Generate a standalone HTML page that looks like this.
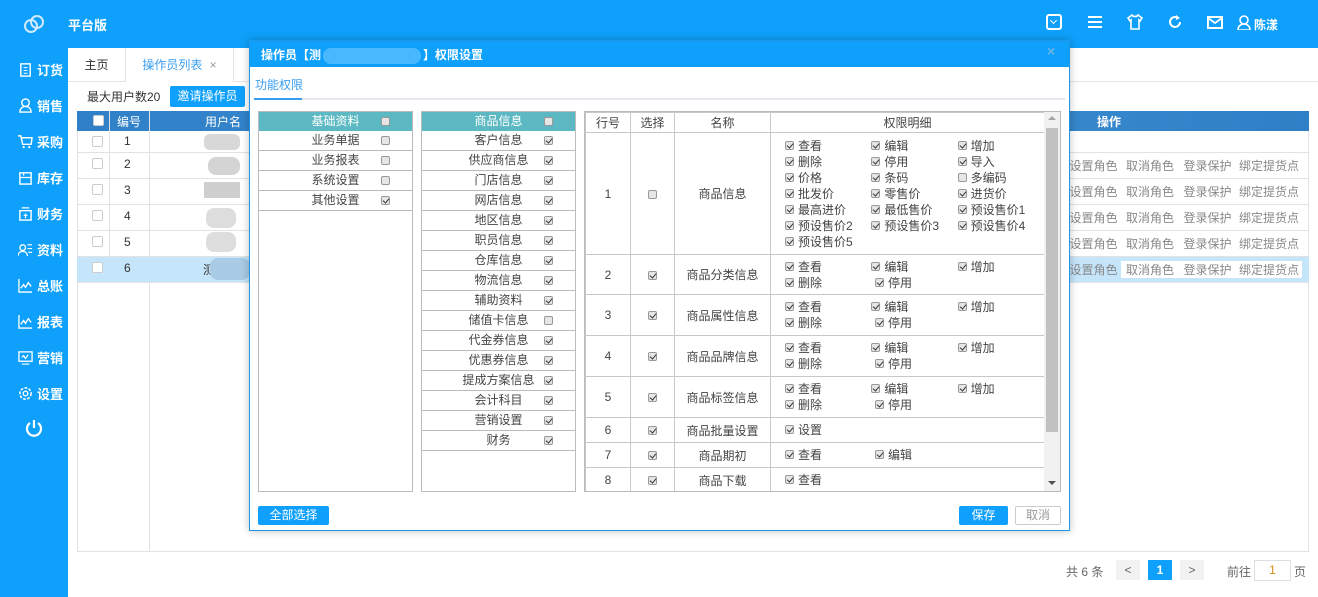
<!DOCTYPE html>
<html><head><meta charset="utf-8">
<style>
*{box-sizing:border-box;margin:0;padding:0}
body{width:1318px;height:597px;overflow:hidden;position:relative;background:#fff;font-family:"Liberation Sans","Noto Sans CJK SC",sans-serif;font-size:12px;color:#333}
.a{position:absolute}
.top{left:0;top:0;width:1318px;height:48px;background:#0ea0fb}
.side{left:0;top:48px;width:68px;height:549px;background:#0ea0fb}
.si{position:absolute;left:18px;color:#fff;font-size:13px;font-weight:bold;display:flex;align-items:center;gap:4px}
.si svg{width:15px;height:15px}
.cb{display:inline-block;width:9px;height:9px;border:1px solid #999;border-radius:2px;background:#e6e6e6;position:relative;vertical-align:middle}
.cb.c::after{content:"";position:absolute;left:2px;top:0px;width:3px;height:5px;border:solid #333;border-width:0 1.5px 1.5px 0;transform:rotate(40deg)}
.wb{display:inline-block;width:11px;height:11px;border:1px solid #ccc;background:#fff;border-radius:2px}
.row{position:absolute;left:77px;width:1232px;height:26px;border-bottom:1px solid #e2e2e2}
.ops{position:absolute;left:1066px;color:#888;font-size:12px;white-space:nowrap}
.ops span{display:inline-block;text-align:center;white-space:nowrap}
.dlg{left:249px;top:40px;width:821px;height:491px;background:#fff;border:1px solid #1e96e8;box-shadow:0 0 8px rgba(0,0,0,.25)}
.pl{position:absolute;border:1px solid #bbb;background:#fff}
.ph{height:19px;background:#5cb9c3;color:#fff;text-align:center;line-height:19px;position:relative}
.pr{height:20px;border-bottom:1px solid #bbb;text-align:center;line-height:19px;position:relative;color:#444}
.pr .cb,.ph .cb{position:absolute;right:22px;top:5px}
.rt td{border:1px solid #c8c8c8;text-align:center;color:#444;font-size:12px;padding:0}
.rt{border-collapse:collapse;position:absolute;left:0;top:0;table-layout:fixed}
.dt{text-align:left!important;padding:0 0 0 14px!important}
.dt div{display:flex;height:16px;line-height:16px}
.dt div span{width:90px;white-space:nowrap}
.dt .cb{margin-right:4px;margin-top:-2px}
</style></head><body>
<div class="a top"></div>
<svg class="a" style="left:22px;top:13px" width="24" height="22" viewBox="0 0 24 22"><g fill="none" stroke="#cfeaff" stroke-width="2"><circle cx="9" cy="13" r="6"/><circle cx="15" cy="9" r="6"/></g></svg>
<div class="a" style="left:68px;top:15px;color:#fff;font-size:13px;font-weight:bold">平台版</div>
<div class="a" style="left:1046px;top:14px;width:16px;height:16px;border:2px solid #fff;border-radius:3px"></div>
<div class="a" style="left:1051px;top:18px;width:5px;height:5px;border:solid #fff;border-width:0 1.5px 1.5px 0;transform:rotate(45deg)"></div>
<svg class="a" style="left:1088px;top:15px" width="14" height="14"><g stroke="#fff" stroke-width="2"><line x1="0" y1="2" x2="14" y2="2"/><line x1="0" y1="7" x2="14" y2="7"/><line x1="0" y1="12" x2="14" y2="12"/></g></svg>
<svg class="a" style="left:1127px;top:14px" width="16" height="16" viewBox="0 0 16 16"><path d="M5 1L1 4l2 3 1-1v9h8V6l1 1 2-3-4-3c-1 2-5 2-6 0z" fill="none" stroke="#fff" stroke-width="1.6"/></svg>
<svg class="a" style="left:1167px;top:14px" width="16" height="16" viewBox="0 0 16 16"><path d="M13 8a5 5 0 1 1-2-4" fill="none" stroke="#fff" stroke-width="2"/><path d="M9 1l4 3-4 2z" fill="#fff"/></svg>
<svg class="a" style="left:1207px;top:16px" width="16" height="13"><rect x="1" y="1" width="14" height="11" fill="none" stroke="#fff" stroke-width="2"/><path d="M1 2l7 5 7-5" fill="none" stroke="#fff" stroke-width="1.8"/></svg>
<svg class="a" style="left:1237px;top:15px" width="14" height="15"><circle cx="7" cy="5" r="4" fill="none" stroke="#fff" stroke-width="1.6"/><path d="M1 15c0-4 3-6 6-6s6 2 6 6z" fill="none" stroke="#fff" stroke-width="1.6"/></svg>
<div class="a" style="left:1254px;top:16px;color:#fff;font-size:12px;font-weight:bold">陈漾</div>

<div class="a side"></div>
<div class="si" style="top:60px"><svg viewBox="0 0 16 16"><rect x="3" y="2" width="10" height="13" fill="none" stroke="#fff" stroke-width="1.5"/><path d="M6 6h4M6 9h4M6 12h4" stroke="#fff"/></svg>订货</div>
<div class="si" style="top:96px"><svg viewBox="0 0 16 16"><circle cx="8" cy="5" r="4" fill="none" stroke="#fff" stroke-width="1.5"/><path d="M2 15c0-4 3-6 6-6s6 2 6 6z" fill="none" stroke="#fff" stroke-width="1.5"/></svg>销售</div>
<div class="si" style="top:132px"><svg viewBox="0 0 16 16"><path d="M0 2h3l2 9h9l1-7H4" fill="none" stroke="#fff" stroke-width="1.5"/><circle cx="6" cy="14" r="1.2" fill="#fff"/><circle cx="12" cy="14" r="1.2" fill="#fff"/></svg>采购</div>
<div class="si" style="top:168px"><svg viewBox="0 0 16 16"><rect x="2" y="3" width="12" height="12" fill="none" stroke="#fff" stroke-width="1.5"/><path d="M2 8h12M6 3v3" stroke="#fff" stroke-width="1.3"/></svg>库存</div>
<div class="si" style="top:204px"><svg viewBox="0 0 16 16"><rect x="2" y="5" width="12" height="10" fill="none" stroke="#fff" stroke-width="1.5"/><path d="M4 2h8M8 8v5M6 10h4" stroke="#fff" stroke-width="1.3"/></svg>财务</div>
<div class="si" style="top:240px"><svg viewBox="0 0 16 16"><circle cx="5" cy="6" r="3" fill="none" stroke="#fff" stroke-width="1.4"/><path d="M0 15c0-3 2-5 5-5s5 2 5 5M10 3h5M10 7h5M11 11h4" fill="none" stroke="#fff" stroke-width="1.3"/></svg>资料</div>
<div class="si" style="top:276px"><svg viewBox="0 0 16 16"><path d="M1 1v14h14M3 11l3-4 2 3 3-5 3 4" fill="none" stroke="#fff" stroke-width="1.4"/></svg>总账</div>
<div class="si" style="top:312px"><svg viewBox="0 0 16 16"><path d="M1 1v14h14M3 11l3-4 2 3 3-5 3 4" fill="none" stroke="#fff" stroke-width="1.4"/></svg>报表</div>
<div class="si" style="top:348px"><svg viewBox="0 0 16 16"><rect x="1" y="2" width="14" height="10" fill="none" stroke="#fff" stroke-width="1.4"/><path d="M4 15h8M4 8l2-2 2 3 3-4" fill="none" stroke="#fff" stroke-width="1.3"/></svg>营销</div>
<div class="si" style="top:384px"><svg viewBox="0 0 16 16"><circle cx="8" cy="8" r="6" fill="none" stroke="#fff" stroke-width="1.6" stroke-dasharray="3 1.5"/><circle cx="8" cy="8" r="2.5" fill="none" stroke="#fff" stroke-width="1.4"/></svg>设置</div>
<svg class="a" style="left:25px;top:419px" width="18" height="18" viewBox="0 0 18 18"><path d="M5 4a7 7 0 1 0 8 0" fill="none" stroke="#fff" stroke-width="2.2"/><line x1="9" y1="1" x2="9" y2="9" stroke="#fff" stroke-width="2.2"/></svg>

<div class="a" style="left:68px;top:48px;width:1250px;height:34px;border-bottom:1px solid #e4e4e4"></div>
<div class="a" style="left:68px;top:48px;width:58px;height:34px;border-right:1px solid #e4e4e4;line-height:34px;text-align:center;font-size:12px;color:#333">主页</div>
<div class="a" style="left:126px;top:48px;width:108px;height:34px;border-right:1px solid #e4e4e4;background:#fff;line-height:34px;text-align:center;color:#3a9ef0;font-size:12px">操作员列表 <span style="color:#999;margin-left:4px">×</span></div>
<div class="a" style="left:87px;top:88px;font-size:12px">最大用户数20</div>
<div class="a" style="left:170px;top:86px;width:75px;height:21px;background:#0ea0fb;color:#fff;border-radius:2px;text-align:center;line-height:21px">邀请操作员</div>

<div class="a" style="left:77px;top:111px;width:1232px;height:441px;border:1px solid #e2e2e2"></div>
<div class="a" style="left:77px;top:111px;width:1232px;height:20px;background:linear-gradient(90deg,#2f80c8,#3d8fd2 60%,#2f7fc6);color:#fff;font-weight:bold"></div>
<div class="a" style="left:93px;top:115px"><span class="wb"></span></div>
<div class="a" style="left:117px;top:113px;color:#fff;font-size:12px">编号</div>
<div class="a" style="left:205px;top:113px;color:#fff;font-size:12px">用户名</div>
<div class="a" style="left:1097px;top:113px;color:#fff;font-size:12px;font-weight:bold">操作</div>
<div class="a" style="left:109px;top:111px;width:1px;height:171px;background:#e2e2e2"></div>
<div class="a" style="left:149px;top:111px;width:1px;height:441px;background:#e2e2e2"></div>
<div class="row" style="top:131px;height:22px"></div>
<div class="row" style="top:153px"></div>
<div class="row" style="top:179px"></div>
<div class="row" style="top:205px"></div>
<div class="row" style="top:231px"></div>
<div class="row" style="top:257px;background:#c5e5fb"></div>
<div class="a" style="left:92px;top:136px"><span class="wb"></span></div><div class="a" style="left:124px;top:134px">1</div>
<div class="a" style="left:92px;top:158px"><span class="wb"></span></div><div class="a" style="left:124px;top:157px">2</div>
<div class="a" style="left:92px;top:184px"><span class="wb"></span></div><div class="a" style="left:124px;top:183px">3</div>
<div class="a" style="left:92px;top:210px"><span class="wb"></span></div><div class="a" style="left:124px;top:209px">4</div>
<div class="a" style="left:92px;top:236px"><span class="wb"></span></div><div class="a" style="left:124px;top:235px">5</div>
<div class="a" style="left:92px;top:262px"><span class="wb"></span></div><div class="a" style="left:124px;top:261px">6</div>
<div class="a" style="left:204px;top:134px;width:36px;height:16px;background:#d8d8d8;border-radius:6px"></div>
<div class="a" style="left:208px;top:157px;width:32px;height:18px;background:#d4d4d4;border-radius:8px"></div>
<div class="a" style="left:204px;top:182px;width:36px;height:16px;background:#cfcfcf"></div>
<div class="a" style="left:206px;top:208px;width:30px;height:20px;background:#ddd;border-radius:8px"></div>
<div class="a" style="left:206px;top:232px;width:30px;height:20px;background:#ddd;border-radius:8px"></div>
<div class="a" style="left:203px;top:261px;font-size:12px">测</div>
<div class="a" style="left:210px;top:258px;width:40px;height:22px;background:#a9cbe6;border-radius:8px"></div>
<div class="ops" style="top:157px"><span style="width:55px">设置角色</span><span style="width:58px">取消角色</span><span style="width:57px">登录保护</span><span style="width:66px">绑定提货点</span></div>
<div class="ops" style="top:183px"><span style="width:55px">设置角色</span><span style="width:58px">取消角色</span><span style="width:57px">登录保护</span><span style="width:66px">绑定提货点</span></div>
<div class="ops" style="top:209px"><span style="width:55px">设置角色</span><span style="width:58px">取消角色</span><span style="width:57px">登录保护</span><span style="width:66px">绑定提货点</span></div>
<div class="ops" style="top:235px"><span style="width:55px">设置角色</span><span style="width:58px">取消角色</span><span style="width:57px">登录保护</span><span style="width:66px">绑定提货点</span></div>
<div class="ops" style="top:261px"><span style="width:55px">设置角色</span><span style="width:58px;background:#fff">取消角色</span><span style="width:57px;background:#fff">登录保护</span><span style="width:66px;background:#fff">绑定提货点</span></div>

<div class="a" style="left:1066px;top:563px;color:#666">共 6 条</div>
<div class="a" style="left:1116px;top:560px;width:24px;height:20px;background:#f2f2f2;text-align:center;line-height:20px;color:#666">&lt;</div>
<div class="a" style="left:1148px;top:560px;width:24px;height:20px;background:#0ea0fb;color:#fff;font-weight:bold;text-align:center;line-height:20px">1</div>
<div class="a" style="left:1180px;top:560px;width:24px;height:20px;background:#f2f2f2;text-align:center;line-height:20px;color:#666">&gt;</div>
<div class="a" style="left:1227px;top:563px;color:#666">前往</div>
<div class="a" style="left:1254px;top:560px;width:37px;height:21px;border:1px solid #dcdfe6;text-align:center;line-height:19px;color:#d08a20">1</div>
<div class="a" style="left:1294px;top:563px;color:#666">页</div>

<div class="a dlg">
 <div class="a" style="left:0;top:0;width:819px;height:26px;background:#0ea0fb"></div>
 <div class="a" style="left:11px;top:5px;color:#fff;font-weight:bold;font-size:12px">操作员【测<span style="display:inline-block;width:98px;height:16px;background:#4ab8ff;border-radius:8px;vertical-align:middle;margin:0 2px"></span>】权限设置</div>
 <div class="a" style="left:797px;top:2px;color:#6bb4e8;font-size:14px;font-weight:bold">×</div>
 <div class="a" style="left:5px;top:35px;color:#3a9ef0;font-size:12px">功能权限</div>
 <div class="a" style="left:4px;top:57px;width:811px;height:2px;background:#e4e7ed"></div>
 <div class="a" style="left:4px;top:57px;width:48px;height:2px;background:#3a9ef0"></div>

 <div class="pl" style="left:8px;top:70px;width:155px;height:381px">
  <div class="ph">基础资料<span class="cb"></span></div>
  <div class="pr">业务单据<span class="cb"></span></div>
  <div class="pr">业务报表<span class="cb"></span></div>
  <div class="pr">系统设置<span class="cb"></span></div>
  <div class="pr">其他设置<span class="cb c"></span></div>
 </div>
 <div class="pl" style="left:171px;top:70px;width:155px;height:381px">
  <div class="ph">商品信息<span class="cb"></span></div>
  <div class="pr">客户信息<span class="cb c"></span></div>
  <div class="pr">供应商信息<span class="cb c"></span></div>
  <div class="pr">门店信息<span class="cb c"></span></div>
  <div class="pr">网店信息<span class="cb c"></span></div>
  <div class="pr">地区信息<span class="cb c"></span></div>
  <div class="pr">职员信息<span class="cb c"></span></div>
  <div class="pr">仓库信息<span class="cb c"></span></div>
  <div class="pr">物流信息<span class="cb c"></span></div>
  <div class="pr">辅助资料<span class="cb c"></span></div>
  <div class="pr">储值卡信息<span class="cb"></span></div>
  <div class="pr">代金券信息<span class="cb c"></span></div>
  <div class="pr">优惠券信息<span class="cb c"></span></div>
  <div class="pr">提成方案信息<span class="cb c"></span></div>
  <div class="pr">会计科目<span class="cb c"></span></div>
  <div class="pr">营销设置<span class="cb c"></span></div>
  <div class="pr">财务<span class="cb c"></span></div>
 </div>
 <div class="pl" style="left:334px;top:70px;width:477px;height:381px;overflow:hidden">
  <table class="rt" style="width:460px">
   <colgroup><col style="width:45px"><col style="width:44px"><col style="width:96px"><col></colgroup>
   <tr style="height:20px"><td>行号</td><td>选择</td><td>名称</td><td>权限明细</td></tr>
   <tr style="height:122px"><td>1</td><td><span class="cb"></span></td><td>商品信息</td><td class="dt">
    <div><span><i class="cb c"></i>查看</span><span><i class="cb c"></i>编辑</span><span><i class="cb c"></i>增加</span></div>
    <div><span><i class="cb c"></i>删除</span><span><i class="cb c"></i>停用</span><span><i class="cb c"></i>导入</span></div>
    <div><span><i class="cb c"></i>价格</span><span><i class="cb c"></i>条码</span><span><i class="cb"></i>多编码</span></div>
    <div><span><i class="cb c"></i>批发价</span><span><i class="cb c"></i>零售价</span><span><i class="cb c"></i>进货价</span></div>
    <div><span><i class="cb c"></i>最高进价</span><span><i class="cb c"></i>最低售价</span><span><i class="cb c"></i>预设售价1</span></div>
    <div><span><i class="cb c"></i>预设售价2</span><span><i class="cb c"></i>预设售价3</span><span><i class="cb c"></i>预设售价4</span></div>
    <div><span><i class="cb c"></i>预设售价5</span></div></td></tr>
   <tr style="height:40px"><td>2</td><td><span class="cb c"></span></td><td>商品分类信息</td><td class="dt">
    <div><span><i class="cb c"></i>查看</span><span><i class="cb c"></i>编辑</span><span><i class="cb c"></i>增加</span></div>
    <div><span><i class="cb c"></i>删除</span><span><i class="cb c"></i>停用</span></div></td></tr>
   <tr style="height:41px"><td>3</td><td><span class="cb c"></span></td><td>商品属性信息</td><td class="dt">
    <div><span><i class="cb c"></i>查看</span><span><i class="cb c"></i>编辑</span><span><i class="cb c"></i>增加</span></div>
    <div><span><i class="cb c"></i>删除</span><span><i class="cb c"></i>停用</span></div></td></tr>
   <tr style="height:41px"><td>4</td><td><span class="cb c"></span></td><td>商品品牌信息</td><td class="dt">
    <div><span><i class="cb c"></i>查看</span><span><i class="cb c"></i>编辑</span><span><i class="cb c"></i>增加</span></div>
    <div><span><i class="cb c"></i>删除</span><span><i class="cb c"></i>停用</span></div></td></tr>
   <tr style="height:41px"><td>5</td><td><span class="cb c"></span></td><td>商品标签信息</td><td class="dt">
    <div><span><i class="cb c"></i>查看</span><span><i class="cb c"></i>编辑</span><span><i class="cb c"></i>增加</span></div>
    <div><span><i class="cb c"></i>删除</span><span><i class="cb c"></i>停用</span></div></td></tr>
   <tr style="height:25px"><td>6</td><td><span class="cb c"></span></td><td>商品批量设置</td><td class="dt"><div><span><i class="cb c"></i>设置</span></div></td></tr>
   <tr style="height:25px"><td>7</td><td><span class="cb c"></span></td><td>商品期初</td><td class="dt"><div><span><i class="cb c"></i>查看</span><span><i class="cb c"></i>编辑</span></div></td></tr>
   <tr style="height:25px"><td>8</td><td><span class="cb c"></span></td><td>商品下载</td><td class="dt"><div><span><i class="cb c"></i>查看</span></div></td></tr>
  </table>
  <div class="a" style="left:459px;top:0;width:16px;height:379px;background:#f1f1f1"></div>
  <div class="a" style="left:461px;top:16px;width:12px;height:304px;background:#c1c1c1"></div>
  <div class="a" style="left:463px;top:4px;width:0;height:0;border:4px solid transparent;border-bottom-color:#a3a3a3;border-top:0"></div>
  <div class="a" style="left:463px;top:369px;width:0;height:0;border:4px solid transparent;border-top-color:#505050;border-bottom:0"></div>
 </div>

 <div class="a" style="left:8px;top:465px;width:71px;height:19px;background:#0ea0fb;color:#fff;border-radius:2px;text-align:center;line-height:19px">全部选择</div>
 <div class="a" style="left:709px;top:465px;width:49px;height:19px;background:#0ea0fb;color:#fff;border-radius:2px;text-align:center;line-height:19px">保存</div>
 <div class="a" style="left:765px;top:465px;width:46px;height:19px;border:1px solid #ccc;color:#999;border-radius:2px;text-align:center;line-height:17px">取消</div>
</div>
</body></html>
